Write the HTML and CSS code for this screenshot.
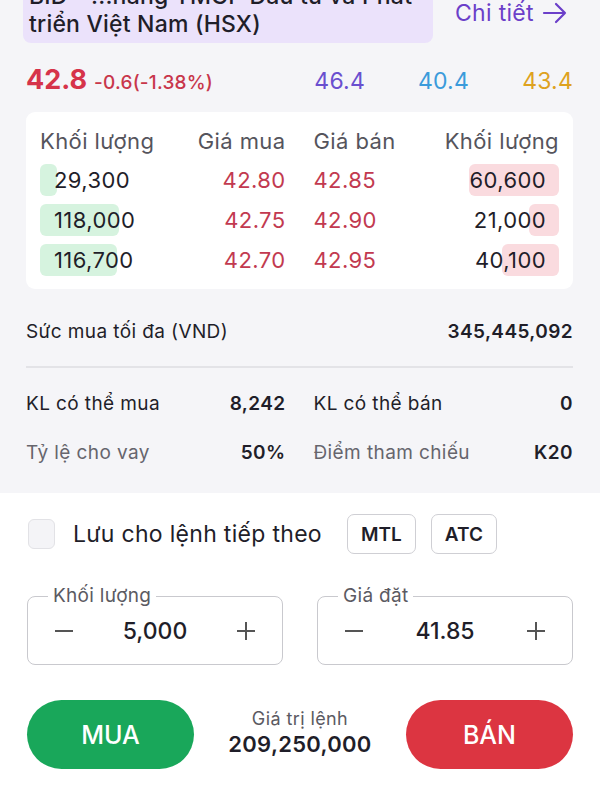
FILE: index.html
```html
<!DOCTYPE html>
<html lang="vi">
<head>
<meta charset="utf-8">
<title>Đặt lệnh BID</title>
<link rel="stylesheet" href="styles.css">
</head>
<body>

<div class="top">
	<div class="head">
		<div class="name">BID - ...hàng TMCP Đầu tư và Phát<br>triển Việt Nam (HSX)</div>
		<a class="detail">Chi tiết
			<svg width="26" height="22" viewBox="0 0 26 22"><path d="M2 11h21M14 2l9 9-9 9" fill="none" stroke="#6b3fc9" stroke-width="2.2" stroke-linecap="round" stroke-linejoin="round"/></svg>
		</a>
	</div>

	<div class="quote">
		<div class="last"><span class="price">42.8</span><span class="chg">-0.6(-1.38%)</span></div>
		<span class="q ceil">46.4</span>
		<span class="q floor">40.4</span>
		<span class="q ref">43.4</span>
	</div>

	<div class="book">
		<div class="book_row book_head">
			<span>Khối lượng</span>
			<span class="r">Giá mua</span>
			<span>Giá bán</span>
			<span class="r">Khối lượng</span>
		</div>
		<div class="book_row">
			<span class="vol buy"><i class="bar" style="width:17px"></i>29,300</span>
			<span class="r px">42.80</span>
			<span class="px">42.85</span>
			<span class="vol sell"><i class="bar" style="width:90px"></i>60,600</span>
		</div>
		<div class="book_row">
			<span class="vol buy"><i class="bar" style="width:79px"></i>118,000</span>
			<span class="r px">42.75</span>
			<span class="px">42.90</span>
			<span class="vol sell"><i class="bar" style="width:30px"></i>21,000</span>
		</div>
		<div class="book_row">
			<span class="vol buy"><i class="bar" style="width:77px"></i>116,700</span>
			<span class="r px">42.70</span>
			<span class="px">42.95</span>
			<span class="vol sell"><i class="bar" style="width:57px"></i>40,100</span>
		</div>
	</div>

	<div class="info">
		<div class="power">
			<span>Sức mua tối đa (VND)</span>
			<b>345,445,092</b>
		</div>
		<div class="grid">
			<div class="pair"><span>KL có thể mua</span><b>8,242</b></div>
			<div class="pair"><span>KL có thể bán</span><b>0</b></div>
			<div class="pair"><span class="muted">Tỷ lệ cho vay</span><b>50%</b></div>
			<div class="pair"><span class="muted">Điểm tham chiếu</span><b>K20</b></div>
		</div>
	</div>
</div>

<div class="order">
	<div class="opts">
		<span class="check"></span>
		<span class="save">Lưu cho lệnh tiếp theo</span>
		<button class="tag">MTL</button>
		<button class="tag">ATC</button>
	</div>

	<div class="fields">
		<fieldset class="field">
			<legend>Khối lượng</legend>
			<div class="stepper">
				<svg width="20" height="20" viewBox="0 0 20 20"><path d="M1 10h18" stroke="#555" stroke-width="2"/></svg>
				<span class="val">5,000</span>
				<svg width="20" height="20" viewBox="0 0 20 20"><path d="M1 10h18M10 1v18" stroke="#555" stroke-width="2"/></svg>
			</div>
		</fieldset>
		<fieldset class="field">
			<legend>Giá đặt</legend>
			<div class="stepper">
				<svg width="20" height="20" viewBox="0 0 20 20"><path d="M1 10h18" stroke="#555" stroke-width="2"/></svg>
				<span class="val">41.85</span>
				<svg width="20" height="20" viewBox="0 0 20 20"><path d="M1 10h18M10 1v18" stroke="#555" stroke-width="2"/></svg>
			</div>
		</fieldset>
	</div>

	<div class="actions">
		<button class="btn buy_btn">MUA</button>
		<div class="total">
			<span>Giá trị lệnh</span>
			<b>209,250,000</b>
		</div>
		<button class="btn sell_btn">BÁN</button>
	</div>
</div>

</body>
</html>
```

FILE: styles.css
```css
body {
	margin: 0;
	font-family: Inter, "Noto Sans", sans-serif;
	color: #1f1e29;
	background: #fff;
}

.top {
	background: #f5f5f8;
	padding: 0 27px 16px 26px;
}

/* header */
.head {
	display: flex;
	margin-top: -22px;
	margin-left: -3px;
}
.name {
	width: 398px;
	padding: 4px 6px 5px 6px;
	background: #ebe2fb;
	border-radius: 0 0 8px 8px;
	font-size: 23px;
	letter-spacing: 0.2px;
	line-height: 28px;
	font-weight: 500;
}
.detail {
	display: flex;
	align-items: center;
	gap: 8px;
	margin: 21px 0 0 22px;
	height: 28px;
	font-size: 23px;
	letter-spacing: 0.3px;
	color: #6b3fc9;
}

/* quote line */
.quote {
	display: flex;
	align-items: baseline;
	margin-top: 20px;
	height: 34px;
}
.last {
	flex: 1;
}
.price {
	font-size: 27px;
	font-weight: 700;
	color: #d6334a;
	margin-right: 7px;
}
.chg {
	font-size: 19px;
	letter-spacing: 0.2px;
	font-weight: 500;
	color: #c8364b;
}
.q {
	width: 104px;
	text-align: right;
	font-size: 23px;
	letter-spacing: 0.2px;
}
.ceil { color: #6a4fcf; }
.floor { color: #3b9bdb; }
.ref { color: #dea21f; }

/* order book */
.book {
	background: #fff;
	border-radius: 9px;
	margin-top: 15px;
	padding: 16px 14px 9px 14px;
}
.book_row {
	display: grid;
	grid-template-columns: 118px 1fr 1fr 118px;
	column-gap: 28px;
	height: 40px;
	align-items: center;
	font-size: 22px;
	letter-spacing: 0.4px;
	white-space: nowrap;
}
.book_head {
	color: #55545c;
	height: 32px;
	align-items: start;
	line-height: 26px;
}
.r {
	text-align: right;
}
.px {
	color: #c23a50;
}
.vol {
	position: relative;
	z-index: 0;
	line-height: 32px;
}
.vol.buy {
	padding-left: 14px;
}
.vol.sell {
	text-align: right;
	padding-right: 13px;
}
.bar {
	position: absolute;
	z-index: -1;
	top: 0;
	height: 32px;
	border-radius: 6px;
}
.buy .bar {
	left: 0;
	background: #d6f3df;
}
.sell .bar {
	right: 0;
	background: #fadbdf;
}

/* account info */
.info {
	padding-top: 22px;
	font-size: 19px;
	letter-spacing: 0.4px;
}
.power {
	display: flex;
	justify-content: space-between;
	align-items: center;
	height: 40px;
	border-bottom: 2px solid #e3e3e7;
	padding-bottom: 15px;
}
.grid {
	display: grid;
	grid-template-columns: 1fr 1fr;
	column-gap: 28px;
	padding-top: 11px;
}
.pair {
	display: flex;
	justify-content: space-between;
	height: 49px;
	line-height: 49px;
}
.muted {
	color: #66656d;
}
b {
	font-weight: 600;
}

/* order form */
.order {
	padding: 21px 27px 0 27px;
}
.opts {
	display: flex;
	align-items: center;
	height: 40px;
}
.check {
	width: 27px;
	height: 30px;
	box-sizing: border-box;
	border: 1.5px solid #e2e2e6;
	background: #f4f4f7;
	border-radius: 6px;
	margin-left: 1px;
}
.save {
	font-size: 23px;
	letter-spacing: 0.3px;
	margin: 0 25px 0 18px;
}
.tag {
	font-family: inherit;
	font-size: 19px;
	font-weight: 600;
	color: #1f1e29;
	background: #fff;
	border: 1.5px solid #cfcfd4;
	border-radius: 7px;
	height: 40px;
	padding: 0 13px;
	margin-right: 15px;
}

.fields {
	display: flex;
	gap: 34px;
	margin-top: 32px;
}
.field {
	flex: 1;
	margin: 0;
	padding: 0 26px;
	border: 1.5px solid #c9c9ce;
	border-radius: 8px;
	height: 79px;
	box-sizing: border-box;
}
.field legend {
	font-size: 19px;
	letter-spacing: 0.3px;
	color: #5b5a62;
	padding: 0 5px;
	margin-left: -6px;
	line-height: 20px;
}
.stepper {
	display: flex;
	justify-content: space-between;
	align-items: center;
	height: 50px;
}
.val {
	font-size: 23px;
	font-weight: 500;
}

.actions {
	display: flex;
	align-items: center;
	justify-content: space-between;
	margin-top: 35px;
}
.btn {
	width: 167px;
	height: 69px;
	border: none;
	border-radius: 35px;
	color: #fff;
	font-family: inherit;
	font-size: 25px;
	font-weight: 500;
}
.buy_btn { background: #19a75a; }
.sell_btn { background: #dc3541; }
.total {
	display: flex;
	flex-direction: column;
	align-items: center;
	gap: 2px;
	margin-top: -4px;
}
.total span {
	font-size: 18px;
	letter-spacing: 0.4px;
	color: #5b5a62;
}
.total b {
	font-size: 22px;
	letter-spacing: 0.3px;
}
```
